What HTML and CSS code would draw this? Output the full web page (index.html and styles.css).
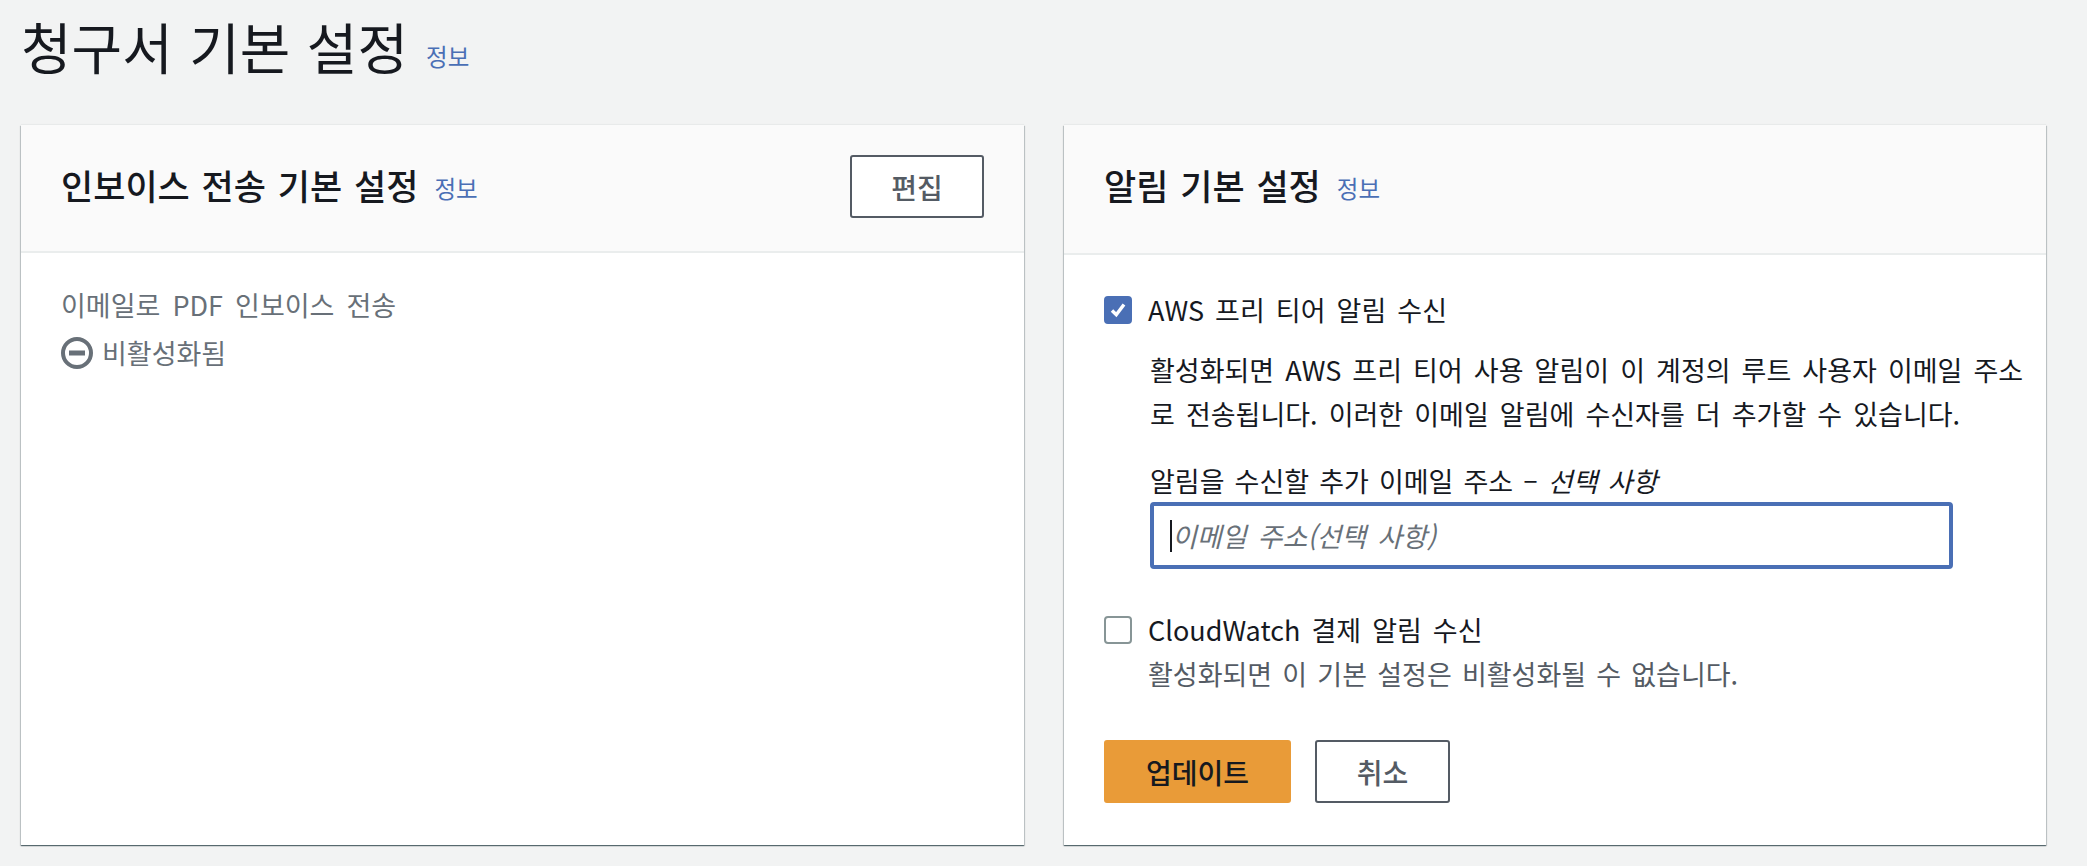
FILE: index.html
```html
<!DOCTYPE html>
<html lang="ko">
<head>
<meta charset="utf-8">
<title>청구서 기본 설정</title>
<link rel="stylesheet" href="styles.css">
</head>
<body>
<header class="page-head">
  <h1 class="page-title">청구서 기본 설정</h1>
  <a class="info info-page">정보</a>
</header>
<main class="columns">
  <section class="card">
    <div class="card-head card-head-left">
      <h2 class="card-title">인보이스 전송 기본 설정</h2>
      <a class="info">정보</a>
      <button class="btn btn-edit">편집</button>
    </div>
    <div class="card-body-left">
      <div class="label-muted">이메일로 PDF 인보이스 전송</div>
      <div class="status">
        <svg class="status-icon" width="32" height="32" viewBox="0 0 32 32"><circle cx="16" cy="16" r="14" fill="none" stroke="#687078" stroke-width="4"/><rect x="8" y="13.5" width="16" height="5" fill="#687078"/></svg>
        <span>비활성화됨</span>
      </div>
    </div>
  </section>
  <section class="card">
    <div class="card-head card-head-right">
      <h2 class="card-title">알림 기본 설정</h2>
      <a class="info">정보</a>
    </div>
    <div class="card-body-right">
      <div class="check-row">
        <span class="box box-on"><svg width="28" height="28" viewBox="0 0 28 28"><path d="M7 14.5l5 5 9-12" fill="none" stroke="#fff" stroke-width="4"/></svg></span>
        <span class="check-label">AWS 프리 티어 알림 수신</span>
      </div>
      <p class="desc">활성화되면 AWS 프리 티어 사용 알림이 이 계정의 루트 사용자 이메일 주소로 전송됩니다. 이러한 이메일 알림에 수신자를 더 추가할 수 있습니다.</p>
      <div class="field-label">알림을 수신할 추가 이메일 주소 – <i>선택 사항</i></div>
      <div class="input"><span class="caret"></span><span>이메일 주소(선택 사항)</span></div>
      <div class="check-row check-row-2">
        <span class="box"></span>
        <span class="check-label">CloudWatch 결제 알림 수신</span>
      </div>
      <p class="hint">활성화되면 이 기본 설정은 비활성화될 수 없습니다.</p>
      <div class="actions">
        <button class="btn btn-primary">업데이트</button>
        <button class="btn btn-cancel">취소</button>
      </div>
    </div>
  </section>
</main>
</body>
</html>
```
FILE: styles.css
```css
* { box-sizing: border-box; }
html, body { margin: 0; height: 100%; }
body {
  background: #f2f3f3;
  color: #16191f;
  font-family: "Noto Sans CJK KR", "Noto Sans", sans-serif;
  height: 866px;
  overflow: hidden;
  padding: 0 41px 0 21px;
}
.page-head { display: flex; align-items: center; height: 125px; padding-bottom: 35px; gap: 18px; }
.page-title { margin: 0; font-size: 55px; font-weight: 400; line-height: 66px; word-spacing: 1px; }
.info { color: #4a6fb5; font-size: 23.5px; line-height: 30px; }
.info-page { margin-top: 21px; }
.columns { display: grid; grid-template-columns: 1003px 982px; gap: 40px; }
.card { background: #fff; height: 720px; box-shadow: 0 1px 1px 0 rgba(0,28,36,.5), 1px 1px 1px 0 rgba(0,28,36,.15), -1px 1px 1px 0 rgba(0,28,36,.15), 0 -1px 1px 0 rgba(0,28,36,.04); }
.card-head { background: #fafafa; border-bottom: 2px solid #eaeded; display: flex; align-items: center; padding: 0 40px; gap: 16px; }
.card-head-left { height: 128px; padding-bottom: 6px; }
.card-head-right { height: 130px; padding-bottom: 8px; }
.card-title { margin: 0; font-size: 35px; font-weight: 500; line-height: 44px; word-spacing: 2px; }
.card-head .info { margin-top: 6px; }
.card-head .btn-edit { margin: 3px 0 0 auto; }
.btn { height: 63px; width: 134px; background: #fff; border: 2px solid #545b64; border-radius: 3px; font: 500 28px "Noto Sans CJK KR", sans-serif; color: #545b64; padding: 0; }
.btn-primary { width: 187px; background: #e99b38; border-color: #e99b38; color: #16191f; }
.btn-cancel { width: 135px; }
.card-body-left { padding: 29px 40px; font-size: 27px; word-spacing: 4.5px; color: #687078; }
.label-muted { line-height: 46px; }
.status { display: flex; align-items: center; gap: 9px; line-height: 50px; }
.card-body-right { padding: 32px 20px 0 40px; font-size: 27px; word-spacing: 3.5px; }
.check-row { display: flex; align-items: center; gap: 16px; height: 46px; }
.check-row-2 { margin-top: 38px; }
.box { width: 28px; height: 28px; border: 2px solid #879596; border-radius: 4px; display: flex; align-items: center; justify-content: center; flex: none; }
.box-on { background: #4a6fb5; border-color: #4a6fb5; }
.check-label { line-height: 44px; }
.desc { margin: 15px 0 0 46px; line-height: 44px; }
.field-label { margin: 24px 0 0 46px; line-height: 42px; word-spacing: 2.5px; }
.input { margin: 0 0 0 46px; width: 803px; height: 67px; border: 4px solid #4a6fb5; border-radius: 4px; display: flex; align-items: center; padding-left: 16px; font-style: italic; color: #687078; }
.caret { width: 2px; height: 32px; background: #16191f; }
.hint { margin: -1px 0 0 44px; line-height: 44px; color: #545b64; word-spacing: 2.6px; }
.actions { display: flex; gap: 24px; margin-top: 44px; }
```
